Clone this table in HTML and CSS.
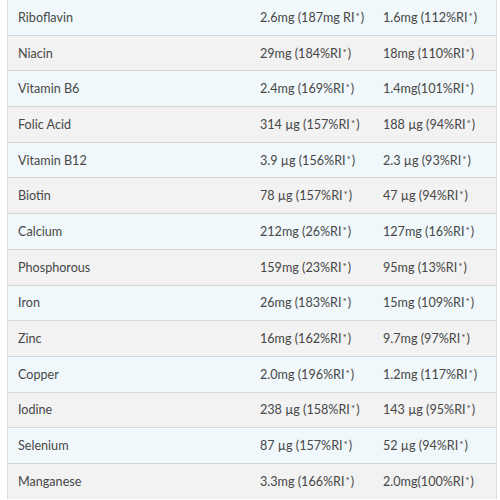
FILE: index.html
```html
<!DOCTYPE html>
<html>
<head>
<meta charset="utf-8">
<link rel="stylesheet" href="styles.css">
</head>
<body>
<div class="table">
  <div class="row blue"><div class="c name">Riboflavin</div><div class="c">2.6mg (187mg RI<span class="ast">*</span>)</div><div class="c">1.6mg (112%RI<span class="ast">*</span>)</div></div>
  <div class="row gray"><div class="c name">Niacin</div><div class="c">29mg (184%RI<span class="ast">*</span>)</div><div class="c">18mg (110%RI<span class="ast">*</span>)</div></div>
  <div class="row blue"><div class="c name">Vitamin B6</div><div class="c">2.4mg (169%RI<span class="ast">*</span>)</div><div class="c">1.4mg(101%RI<span class="ast">*</span>)</div></div>
  <div class="row gray"><div class="c name">Folic Acid</div><div class="c">314 µg (157%RI<span class="ast">*</span>)</div><div class="c">188 µg (94%RI<span class="ast">*</span>)</div></div>
  <div class="row blue"><div class="c name">Vitamin B12</div><div class="c">3.9 µg (156%RI<span class="ast">*</span>)</div><div class="c">2.3 µg (93%RI<span class="ast">*</span>)</div></div>
  <div class="row gray"><div class="c name">Biotin</div><div class="c">78 µg (157%RI<span class="ast">*</span>)</div><div class="c">47 µg (94%RI<span class="ast">*</span>)</div></div>
  <div class="row blue"><div class="c name">Calcium</div><div class="c">212mg (26%RI<span class="ast">*</span>)</div><div class="c">127mg (16%RI<span class="ast">*</span>)</div></div>
  <div class="row gray"><div class="c name">Phosphorous</div><div class="c">159mg (23%RI<span class="ast">*</span>)</div><div class="c">95mg (13%RI<span class="ast">*</span>)</div></div>
  <div class="row blue"><div class="c name">Iron</div><div class="c">26mg (183%RI<span class="ast">*</span>)</div><div class="c">15mg (109%RI<span class="ast">*</span>)</div></div>
  <div class="row gray"><div class="c name">Zinc</div><div class="c">16mg (162%RI<span class="ast">*</span>)</div><div class="c">9.7mg (97%RI<span class="ast">*</span>)</div></div>
  <div class="row blue"><div class="c name">Copper</div><div class="c">2.0mg (196%RI<span class="ast">*</span>)</div><div class="c">1.2mg (117%RI<span class="ast">*</span>)</div></div>
  <div class="row gray"><div class="c name">Iodine</div><div class="c">238 µg (158%RI<span class="ast">*</span>)</div><div class="c">143 µg (95%RI<span class="ast">*</span>)</div></div>
  <div class="row blue"><div class="c name">Selenium</div><div class="c">87 µg (157%RI<span class="ast">*</span>)</div><div class="c">52 µg (94%RI<span class="ast">*</span>)</div></div>
  <div class="row gray"><div class="c name">Manganese</div><div class="c">3.3mg (166%RI<span class="ast">*</span>)</div><div class="c">2.0mg(100%RI<span class="ast">*</span>)</div></div>
</div>
</body>
</html>
```
FILE: styles.css
```css
html, body {
  margin: 0;
  padding: 0;
  background: #ffffff;
}
body {
  font-family: Lato, "Open Sans", sans-serif;
  font-size: 12.6px;
  color: #474747;
}
.table {
  margin-left: 7px;
  margin-top: -1px;
  width: 490px;
  border-left: 1px solid #dcdcdc;
  border-right: 1px solid #dcdcdc;
  box-sizing: border-box;
}
.row {
  display: grid;
  grid-template-columns: 242px 123px 1fr;
  height: 35.7px;
  box-sizing: border-box;
  border-top: 1px solid #d6d6d6;
  align-items: center;
}
.blue { background: #f0f8fb; }
.gray { background: #f2f2f2; }
.c {
  padding-left: 10px;
  white-space: nowrap;
}
.ast {
  font-size: 10px;
  vertical-align: 2px;
  padding: 0 1px;
}
```
